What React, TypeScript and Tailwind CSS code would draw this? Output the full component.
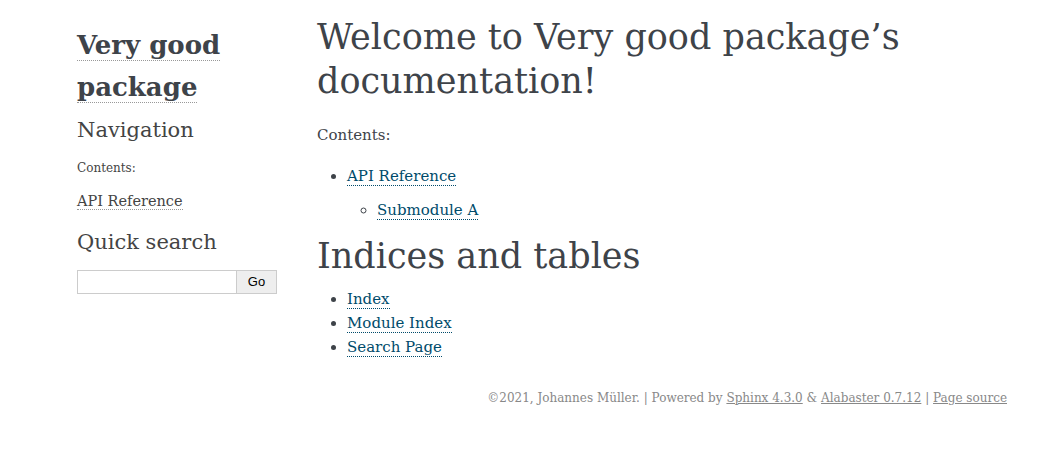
// Sphinx / Alabaster-style docs landing page.

const serif = "font-['DejaVu_Serif','Liberation_Serif',serif]";

const linkMain = "text-[#004b6b] border-b border-dotted border-[#004b6b]";
const linkSide = "text-[#444] border-b border-dotted border-[#999]";

function Sidebar() {
  return (
    <aside className="w-[240px] shrink-0 pt-[24px] text-[#444]">
      <h1 className="text-[26px] font-bold leading-[42px] text-[#3e4349]">
        <span className="border-b border-dotted border-[#999]">Very good</span>
        <br />
        <span className="border-b border-dotted border-[#999]">package</span>
      </h1>
      <h3 className="mt-[7px] text-[21px] leading-[30px]">Navigation</h3>
      <p className="mt-[13px] text-[12px] leading-[20px]">Contents:</p>
      <p className="mt-[12px] text-[14.5px] leading-[22px]">
        <a className={linkSide}>API Reference</a>
      </p>
      <h3 className="mt-[15px] text-[21px] leading-[30px]">Quick search</h3>
      <form className="mt-[13px] flex">
        <input className="h-[24px] w-[160px] border border-[#ccc] bg-white" />
        <button
          type="button"
          className="h-[24px] w-[40px] border border-l-0 border-[#ccc] bg-[#eee] font-['Liberation_Sans',sans-serif] text-[13px] text-black"
        >
          Go
        </button>
      </form>
    </aside>
  );
}

function Main() {
  return (
    <main className="flex-1 pt-[15px] text-[#3e4349]">
      <h1 className="text-[35px] leading-[44px]">
        Welcome to Very good package’s documentation!
      </h1>
      <p className="mt-[21px] text-[15px] leading-[22px]">Contents:</p>
      <ul className="mt-[18px] ml-[14px] list-disc pl-[16px] text-[15px] leading-[24px]">
        <li>
          <a className={linkMain}>API Reference</a>
          <ul className="mt-[10px] ml-[14px] list-[circle] pl-[16px]">
            <li>
              <a className={linkMain}>Submodule A</a>
            </li>
          </ul>
        </li>
      </ul>
      <h2 className="mt-[11px] text-[35px] leading-[46px]">Indices and tables</h2>
      <ul className="mt-[8px] ml-[14px] list-disc pl-[16px] text-[15px] leading-[24px]">
        <li>
          <a className={linkMain}>Index</a>
        </li>
        <li>
          <a className={linkMain}>Module Index</a>
        </li>
        <li>
          <a className={linkMain}>Search Page</a>
        </li>
      </ul>
    </main>
  );
}

export default function App() {
  return (
    <div className={`${serif} min-h-[457px] w-[1056px] bg-white`}>
      <div className="flex pl-[77px]">
        <Sidebar />
        <Main />
      </div>
      <footer className="mt-[29px] pr-[49px] text-right text-[12px] leading-[20px] text-[#888]">
        ©2021, Johannes Müller. | Powered by{" "}
        <a className="text-[#888] underline">Sphinx 4.3.0</a> &amp;{" "}
        <a className="text-[#888] underline">Alabaster 0.7.12</a> |{" "}
        <a className="text-[#888] underline">Page source</a>
      </footer>
    </div>
  );
}
